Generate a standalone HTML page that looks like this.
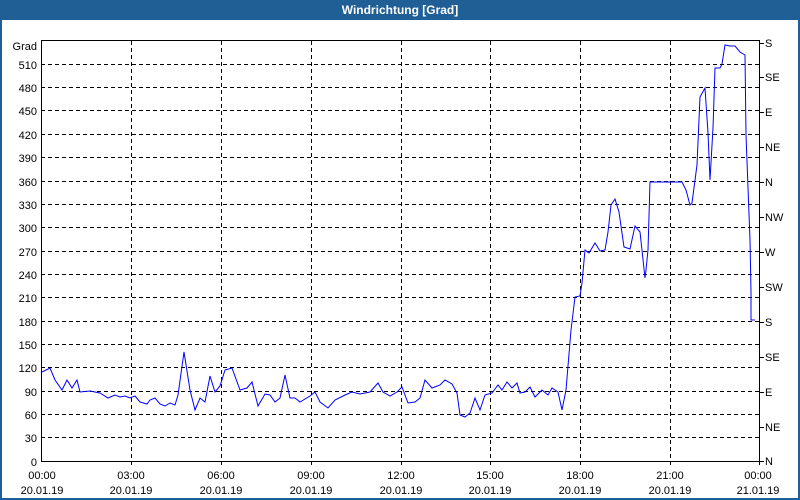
<!DOCTYPE html>
<html><head><meta charset="utf-8"><style>
html,body{margin:0;padding:0;}
body{width:800px;height:500px;background:#1f5f96;position:relative;overflow:hidden;font-family:"Liberation Sans",sans-serif;}
#in{position:absolute;left:2px;top:20px;width:796px;height:478px;background:#fff;}
#t{position:absolute;left:0;top:0;width:800px;height:20px;line-height:20px;text-align:center;color:#fff;font-weight:bold;font-size:12px;}
svg{position:absolute;left:0;top:0;}
text{font-family:"Liberation Sans",sans-serif;font-size:11px;fill:#000;}
</style></head><body>
<div id="t">Windrichtung [Grad]</div>
<div id="in"></div>
<svg width="800" height="500">
<g stroke="#000" stroke-dasharray="4,3" stroke-width="1">
<line x1="131.5" y1="41" x2="131.5" y2="461"/><line x1="221.5" y1="41" x2="221.5" y2="461"/><line x1="311.5" y1="41" x2="311.5" y2="461"/><line x1="401.5" y1="41" x2="401.5" y2="461"/><line x1="490.5" y1="41" x2="490.5" y2="461"/><line x1="580.5" y1="41" x2="580.5" y2="461"/><line x1="670.5" y1="41" x2="670.5" y2="461"/>
<line x1="41" y1="437.5" x2="760" y2="437.5"/><line x1="41" y1="414.5" x2="760" y2="414.5"/><line x1="41" y1="391.5" x2="760" y2="391.5"/><line x1="41" y1="367.5" x2="760" y2="367.5"/><line x1="41" y1="344.5" x2="760" y2="344.5"/><line x1="41" y1="321.5" x2="760" y2="321.5"/><line x1="41" y1="297.5" x2="760" y2="297.5"/><line x1="41" y1="274.5" x2="760" y2="274.5"/><line x1="41" y1="251.5" x2="760" y2="251.5"/><line x1="41" y1="227.5" x2="760" y2="227.5"/><line x1="41" y1="204.5" x2="760" y2="204.5"/><line x1="41" y1="181.5" x2="760" y2="181.5"/><line x1="41" y1="157.5" x2="760" y2="157.5"/><line x1="41" y1="134.5" x2="760" y2="134.5"/><line x1="41" y1="110.5" x2="760" y2="110.5"/><line x1="41" y1="87.5" x2="760" y2="87.5"/><line x1="41" y1="64.5" x2="760" y2="64.5"/>
</g>
<rect x="41.5" y="40.5" width="718" height="421" fill="none" stroke="#000"/>
<g stroke="#000"><line x1="760" y1="43.5" x2="764" y2="43.5"/><line x1="760" y1="77.5" x2="764" y2="77.5"/><line x1="760" y1="112.5" x2="764" y2="112.5"/><line x1="760" y1="147.5" x2="764" y2="147.5"/><line x1="760" y1="182.5" x2="764" y2="182.5"/><line x1="760" y1="217.5" x2="764" y2="217.5"/><line x1="760" y1="252.5" x2="764" y2="252.5"/><line x1="760" y1="287.5" x2="764" y2="287.5"/><line x1="760" y1="322.5" x2="764" y2="322.5"/><line x1="760" y1="357.5" x2="764" y2="357.5"/><line x1="760" y1="392.5" x2="764" y2="392.5"/><line x1="760" y1="427.5" x2="764" y2="427.5"/><line x1="760" y1="461.5" x2="764" y2="461.5"/>
<line x1="131.5" y1="461" x2="131.5" y2="465"/><line x1="221.5" y1="461" x2="221.5" y2="465"/><line x1="311.5" y1="461" x2="311.5" y2="465"/><line x1="401.5" y1="461" x2="401.5" y2="465"/><line x1="490.5" y1="461" x2="490.5" y2="465"/><line x1="580.5" y1="461" x2="580.5" y2="465"/><line x1="670.5" y1="461" x2="670.5" y2="465"/><line x1="759.5" y1="461" x2="759.5" y2="465"/></g>
<g text-anchor="end"><text x="37" y="50">Grad</text><text x="37" y="69">510</text><text x="37" y="92">480</text><text x="37" y="115">450</text><text x="37" y="139">420</text><text x="37" y="162">390</text><text x="37" y="186">360</text><text x="37" y="209">330</text><text x="37" y="232">300</text><text x="37" y="256">270</text><text x="37" y="279">240</text><text x="37" y="302">210</text><text x="37" y="326">180</text><text x="37" y="349">150</text><text x="37" y="372">120</text><text x="37" y="396">90</text><text x="37" y="419">60</text><text x="37" y="442">30</text><text x="37" y="466">0</text></g>
<g><text x="765" y="47">S</text><text x="765" y="81">SE</text><text x="765" y="116">E</text><text x="765" y="151">NE</text><text x="765" y="186">N</text><text x="765" y="221">NW</text><text x="765" y="256">W</text><text x="765" y="291">SW</text><text x="765" y="326">S</text><text x="765" y="361">SE</text><text x="765" y="396">E</text><text x="765" y="431">NE</text><text x="765" y="465">N</text></g>
<g text-anchor="middle"><text x="42" y="479">00:00</text><text x="42" y="494">20.01.19</text><text x="131" y="479">03:00</text><text x="131" y="494">20.01.19</text><text x="221" y="479">06:00</text><text x="221" y="494">20.01.19</text><text x="311" y="479">09:00</text><text x="311" y="494">20.01.19</text><text x="401" y="479">12:00</text><text x="401" y="494">20.01.19</text><text x="490" y="479">15:00</text><text x="490" y="494">20.01.19</text><text x="580" y="479">18:00</text><text x="580" y="494">20.01.19</text><text x="670" y="479">21:00</text><text x="670" y="494">20.01.19</text><text x="758" y="479">00:00</text><text x="758" y="494">21.01.19</text></g>
<polyline fill="none" stroke="#0000ff" stroke-width="1" points="42,372 50,368 55,380 62,390 67,380 72,388 77,380 80,392 90,391 100,393 108,398 115,395 120,397 125,396 130,398 135,396 140,402 147,404 150,400 155,398 160,404 165,406 170,403 175,405 178,395 184,352 190,390 195,410 200,398 205,402 210,376 215,392 220,386 225,370 232,368 240,390 247,388 252,382 258,406 265,394 270,395 275,402 280,398 285,375 290,398 295,398 300,402 310,396 315,392 320,402 328,408 335,400 345,395 352,392 360,394 370,392 378,383 383,392 390,396 397,392 402,387 408,403 415,402 420,398 425,380 432,388 440,385 445,380 452,384 457,393 460,415 465,417 470,413 475,398 480,410 485,395 492,393 498,385 502,390 507,382 512,388 517,383 520,393 525,392 530,387 535,397 542,390 548,395 552,388 558,392 562,410 566,390 571,330 575,297 580,296 582,283 585,250 589,253 595,243 600,251 605,250 608,232 611,205 615,199 619,212 624,247 630,249 635,226 640,232 645,278 646,270 648,250 650,182 682,182 686,190 690,205 692,203 697,165 700,97 705,88 708,133 710,180 713,128 715,68 720,68 722,64 725,45 730,46 735,46 740,52 745,55 746,135 750,240 751,292 751,320 755,320"/>
</svg>
</body></html>
